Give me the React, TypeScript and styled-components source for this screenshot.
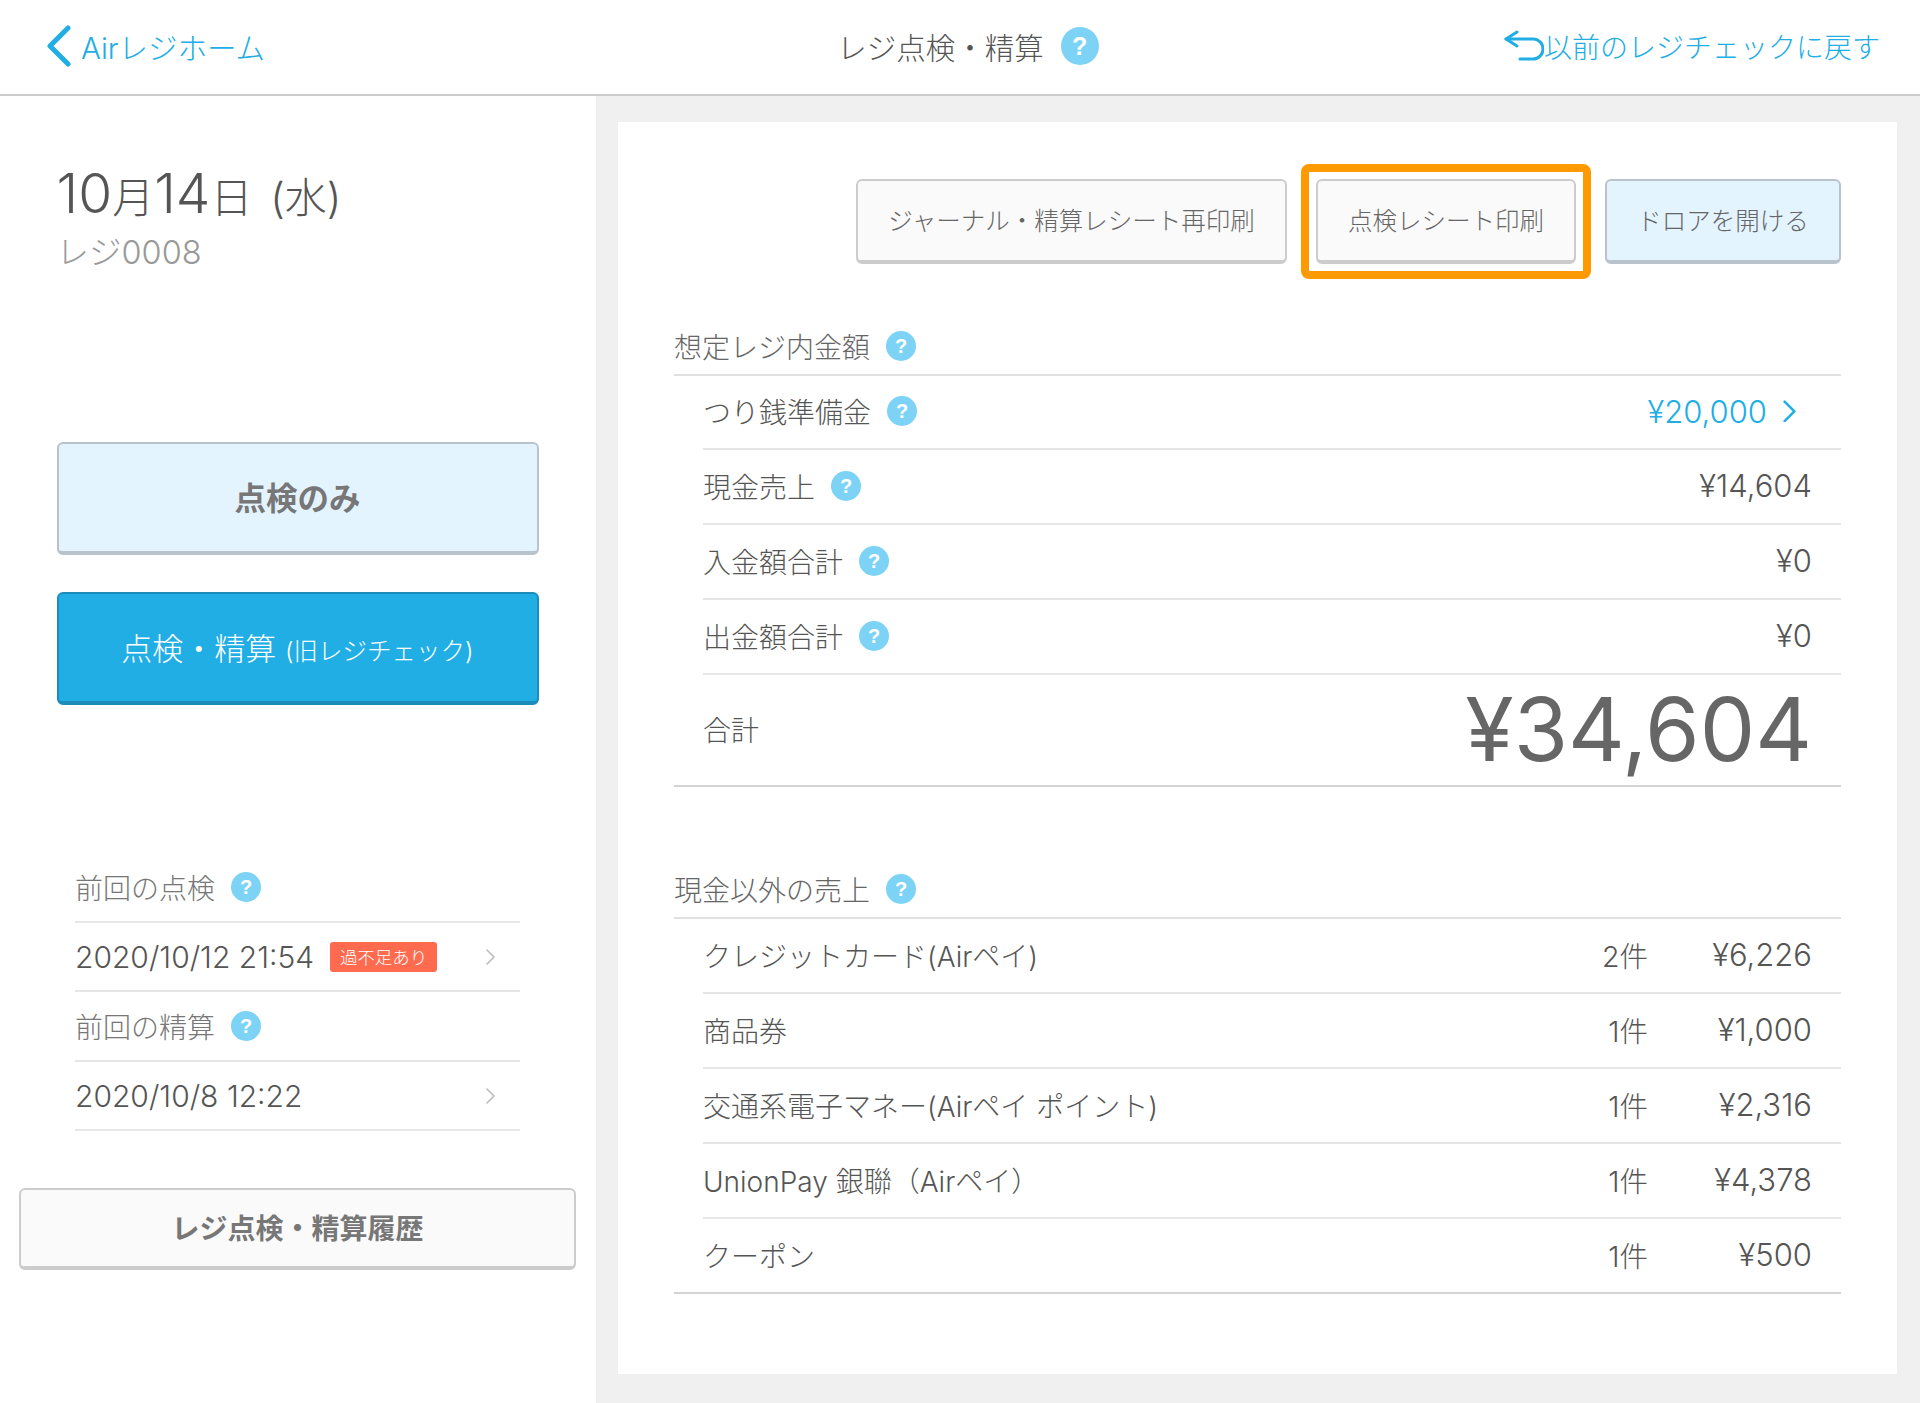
import React from "react";
import styled, { createGlobalStyle } from "styled-components";

const Global = createGlobalStyle`
  html, body { margin: 0; padding: 0; background: #fff; }
  body { font-family: Inter, "Noto Sans CJK JP", sans-serif; font-weight: 300; color: #555; overflow: hidden; }
  * { box-sizing: border-box; }
`;

const Page = styled.div`
  width: 1920px;
  height: 1403px;
  display: flex;
  flex-direction: column;
  overflow: hidden;
`;

const Header = styled.header`
  height: 96px;
  flex: none;
  border-bottom: 2px solid #ccc;
  display: grid;
  grid-template-columns: 1fr auto 1fr;
  align-items: center;
  padding: 0 40px 2px 46px;
  background: #fff;
`;

const BackLink = styled.a`
  display: flex;
  align-items: center;
  gap: 10px;
  color: #20aee5;
  font-size: 29.5px;
`;

const Title = styled.h1`
  margin: 0 0 0 10px;
  display: flex;
  align-items: center;
  gap: 17px;
  font-size: 29.5px;
  font-weight: 300;
  color: #555;
`;

const RevertLink = styled.a`
  justify-self: end;
  display: flex;
  align-items: center;
  color: #20aee5;
  font-size: 28px;
`;

const Help = styled.span<{ $size?: number }>`
  display: inline-flex;
  align-items: center;
  justify-content: center;
  flex: none;
  width: ${(p) => p.$size ?? 30}px;
  height: ${(p) => p.$size ?? 30}px;
  border-radius: 50%;
  background: #7dd3f5;
  color: #fff;
  font-family: "Liberation Sans", sans-serif;
  font-weight: 700;
  font-size: ${(p) => Math.round((p.$size ?? 30) * 0.66)}px;
  line-height: 1;
`;

const Body = styled.div`
  flex: 1;
  display: flex;
  min-height: 0;
`;

const Sidebar = styled.aside`
  width: 596px;
  flex: none;
  background: #fff;
  display: flex;
  flex-direction: column;
  align-items: center;
  padding-right: 1px;
`;

const DateBlock = styled.div`
  width: 482px;
  height: 190px;
  padding-top: 67px;
`;

const DateLine = styled.div`
  font-size: 42px;
  line-height: 60px;
  word-spacing: 6px;
  color: #555;
  white-space: nowrap;
`;

const DateNum = styled.span`
  font-size: 55px;
`;

const Register = styled.div`
  font-size: 32.5px;
  line-height: 40px;
  color: #999;
  margin-top: 5px;
`;

const MainButton = styled.button<{ $primary?: boolean }>`
  width: 482px;
  height: 113px;
  margin-top: ${(p) => (p.$primary ? 37 : 156)}px;
  border-radius: 6px;
  border: 2px solid ${(p) => (p.$primary ? "#1d8cba" : "#b9c3cc")};
  border-bottom-width: 4px;
  background: ${(p) => (p.$primary ? "#20aee5" : "#e3f4ff")};
  color: ${(p) => (p.$primary ? "#fff" : "#777")};
  font-family: inherit;
  font-size: ${(p) => (p.$primary ? 31 : 31.5)}px;
  font-weight: ${(p) => (p.$primary ? 300 : 700)};
  padding: 0 0 3px;
`;

const SmallNote = styled.span`
  font-size: 24.5px;
`;

const History = styled.div`
  width: 445px;
  margin-top: 148px;
`;

const HistoryLabel = styled.div`
  height: 70px;
  display: flex;
  align-items: center;
  gap: 16px;
  border-bottom: 2px solid #e6e6e6;
  font-size: 28px;
  color: #777;
`;

const HistoryRow = styled.div`
  height: 69px;
  display: flex;
  align-items: center;
  border-bottom: 2px solid #e6e6e6;
  font-size: 30px;
  color: #555;
  padding-right: 25px;
`;

const Badge = styled.span`
  margin-left: 16px;
  width: 107px;
  height: 30px;
  background: #ff6b4f;
  color: #fff;
  border-radius: 3px;
  font-size: 17.5px;
  display: flex;
  align-items: center;
  justify-content: center;
`;

const RowArrow = styled.svg`
  margin-left: auto;
  flex: none;
`;

const HistoryButton = styled.button`
  width: 557px;
  height: 82px;
  margin-top: 57px;
  border-radius: 6px;
  border: 2px solid #ccc;
  border-bottom-width: 4px;
  background: #fafafa;
  color: #777;
  font-family: inherit;
  font-size: 28px;
  font-weight: 700;
  padding: 0 0 2px;
`;

const Main = styled.main`
  flex: 1;
  background: #f0f0f0;
  padding: 26px 23px 29px 22px;
  min-width: 0;
`;

const Card = styled.section`
  height: 100%;
  background: #fff;
  padding: 57px 56px 0;
`;

const Actions = styled.div`
  display: flex;
  justify-content: flex-end;
  gap: 29px;
  margin-bottom: 53px;
`;

const ActionSlot = styled.div<{ $highlight?: boolean }>`
  position: relative;
  ${(p) =>
    p.$highlight &&
    `&::after {
      content: "";
      position: absolute;
      inset: -15px;
      border: 8px solid #ff9900;
      border-radius: 8px;
      pointer-events: none;
    }`}
`;

const ActionButton = styled.button<{ $width: number; $blue?: boolean }>`
  display: block;
  width: ${(p) => p.$width}px;
  height: 85px;
  border-radius: 6px;
  border: 2px solid ${(p) => (p.$blue ? "#b9c3cc" : "#ccc")};
  border-bottom-width: 4px;
  background: ${(p) => (p.$blue ? "#e3f4ff" : "#fafafa")};
  color: #666;
  font-family: inherit;
  font-size: 24.5px;
  font-weight: 300;
  padding: 0 0 2px;
`;

const Section = styled.div`
  & + & {
    margin-top: 73px;
  }
`;

const SectionHead = styled.div`
  height: 59px;
  display: flex;
  align-items: center;
  gap: 16px;
  font-size: 28px;
  color: #666;
  border-bottom: 2px solid #e0e0e0;
`;

const Row = styled.div<{ $height?: number }>`
  height: ${(p) => p.$height ?? 75}px;
  margin-left: 29px;
  padding: 0 29px 2px 0;
  display: flex;
  align-items: center;
  border-bottom: 2px solid #e6e6e6;
  font-size: 28px;
  color: #555;
  &:last-child {
    margin-left: 0;
    padding-left: 29px;
    border-bottom-color: #d4d4d4;
  }
`;

const RowLabel = styled.span`
  display: flex;
  align-items: center;
  gap: 16px;
`;

const RowValue = styled.span<{ $link?: boolean }>`
  margin-left: auto;
  display: flex;
  align-items: center;
  gap: 16px;
  font-size: 31px;
  color: ${(p) => (p.$link ? "#20aee5" : "#555")};
`;

const LinkValue = styled(RowValue)`
  margin-right: 16px;
`;

const Grand = styled.span`
  margin-left: auto;
  font-size: 88px;
  font-weight: 400;
  color: #666;
`;

const Count = styled.span`
  margin-left: auto;
  font-size: 28.5px;
`;

const Amount = styled.span`
  width: 164px;
  text-align: right;
  font-size: 31px;
`;

function Chevron({ size = 14, color = "#20aee5", w = 2.5 }: { size?: number; color?: string; w?: number }) {
  return (
    <svg width={size} height={size * 1.75} viewBox="0 0 8 14" fill="none" stroke={color} strokeWidth={w * (8 / size)} strokeLinecap="round" strokeLinejoin="round">
      <path d="M1 1l6 6-6 6" />
    </svg>
  );
}

const cashRows = [
  { label: "現金売上", value: "¥14,604" },
  { label: "入金額合計", value: "¥0" },
  { label: "出金額合計", value: "¥0" },
];

const otherRows = [
  { label: "クレジットカード(Airペイ)", count: "2件", value: "¥6,226" },
  { label: "商品券", count: "1件", value: "¥1,000" },
  { label: "交通系電子マネー(Airペイ ポイント)", count: "1件", value: "¥2,316" },
  { label: "UnionPay 銀聯（Airペイ）", count: "1件", value: "¥4,378" },
  { label: "クーポン", count: "1件", value: "¥500" },
];

export default function App() {
  return (
    <Page>
      <Global />
      <Header>
        <BackLink>
          <svg width="25" height="42" viewBox="0 0 25 42" fill="none" stroke="#20aee5" strokeWidth="5" strokeLinecap="round" strokeLinejoin="round">
            <path d="M22 3L4 21l18 18" />
          </svg>
          Airレジホーム
        </BackLink>
        <Title>
          レジ点検・精算
          <Help $size={38}>?</Help>
        </Title>
        <RevertLink>
          <svg width="40" height="32" viewBox="0 0 40 32" fill="none" stroke="#20aee5" strokeWidth="3" strokeLinecap="round" strokeLinejoin="round">
            <path d="M13 2L2 9l11 7" />
            <path d="M2 9h27a10 10 0 0 1 0 20H16" />
          </svg>
          以前のレジチェックに戻す
        </RevertLink>
      </Header>
      <Body>
        <Sidebar>
          <DateBlock>
            <DateLine>
              <DateNum>10</DateNum>月<DateNum>14</DateNum>日 (水)
            </DateLine>
            <Register>レジ0008</Register>
          </DateBlock>
          <MainButton>点検のみ</MainButton>
          <MainButton $primary>
            点検・精算 <SmallNote>(旧レジチェック)</SmallNote>
          </MainButton>
          <History>
            <HistoryLabel>
              前回の点検
              <Help>?</Help>
            </HistoryLabel>
            <HistoryRow>
              2020/10/12 21:54
              <Badge>過不足あり</Badge>
              <RowArrow width="9" height="16" viewBox="0 0 9 16" fill="none" stroke="#bbb" strokeWidth="1.6" strokeLinecap="round" strokeLinejoin="round">
                <path d="M1 1l7 7-7 7" />
              </RowArrow>
            </HistoryRow>
            <HistoryLabel>
              前回の精算
              <Help>?</Help>
            </HistoryLabel>
            <HistoryRow>
              2020/10/8 12:22
              <RowArrow width="9" height="16" viewBox="0 0 9 16" fill="none" stroke="#bbb" strokeWidth="1.6" strokeLinecap="round" strokeLinejoin="round">
                <path d="M1 1l7 7-7 7" />
              </RowArrow>
            </HistoryRow>
          </History>
          <HistoryButton>レジ点検・精算履歴</HistoryButton>
        </Sidebar>
        <Main>
          <Card>
            <Actions>
              <ActionSlot>
                <ActionButton $width={431}>ジャーナル・精算レシート再印刷</ActionButton>
              </ActionSlot>
              <ActionSlot $highlight>
                <ActionButton $width={260}>点検レシート印刷</ActionButton>
              </ActionSlot>
              <ActionSlot>
                <ActionButton $width={236} $blue>ドロアを開ける</ActionButton>
              </ActionSlot>
            </Actions>
            <Section>
              <SectionHead>
                想定レジ内金額
                <Help>?</Help>
              </SectionHead>
              <Row $height={74}>
                <RowLabel>
                  つり銭準備金
                  <Help>?</Help>
                </RowLabel>
                <LinkValue $link>
                  ¥20,000
                  <Chevron size={13} />
                </LinkValue>
              </Row>
              {cashRows.map((r) => (
                <Row key={r.label}>
                  <RowLabel>
                    {r.label}
                    <Help>?</Help>
                  </RowLabel>
                  <RowValue>{r.value}</RowValue>
                </Row>
              ))}
              <Row $height={112}>
                <RowLabel>合計</RowLabel>
                <Grand>¥34,604</Grand>
              </Row>
            </Section>
            <Section>
              <SectionHead>
                現金以外の売上
                <Help>?</Help>
              </SectionHead>
              {otherRows.map((r) => (
                <Row key={r.label}>
                  <RowLabel>{r.label}</RowLabel>
                  <Count>{r.count}</Count>
                  <Amount>{r.value}</Amount>
                </Row>
              ))}
            </Section>
          </Card>
        </Main>
      </Body>
    </Page>
  );
}
